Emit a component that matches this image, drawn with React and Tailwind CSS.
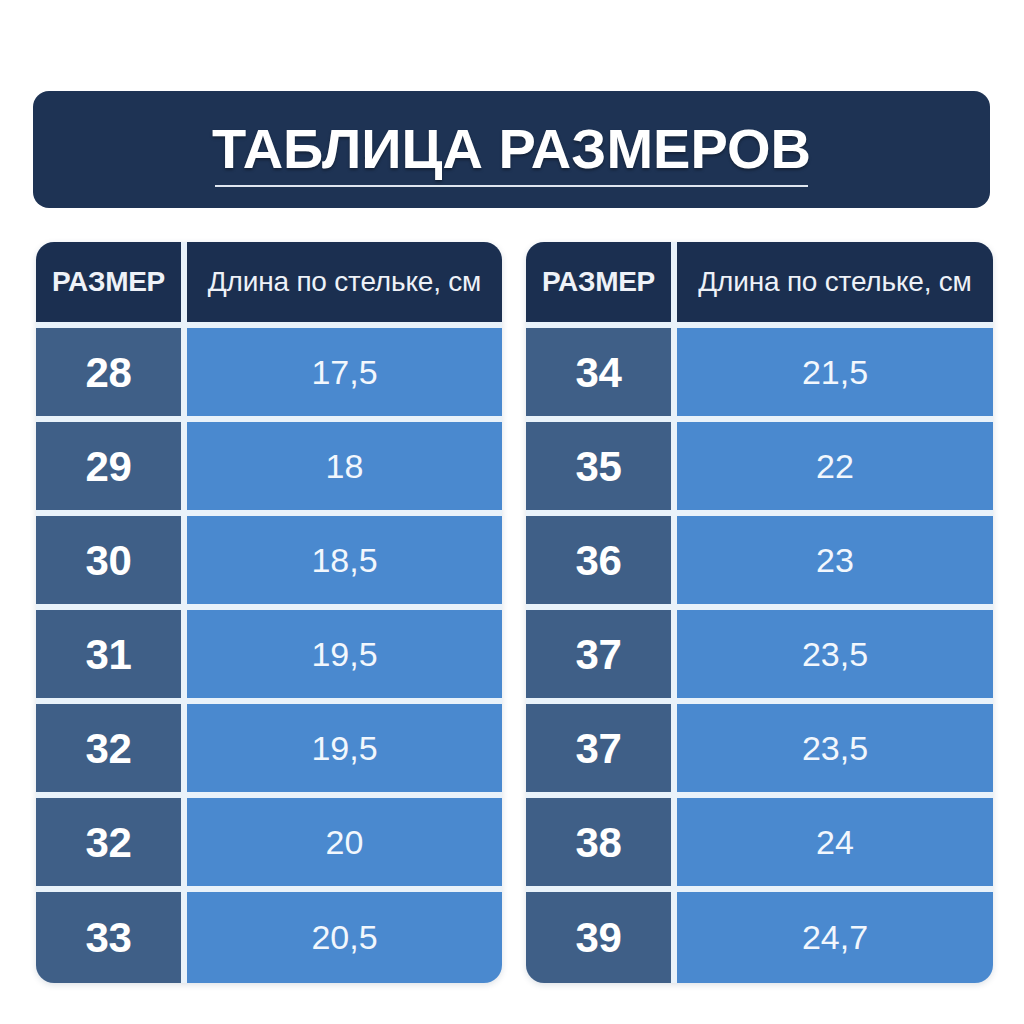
import React from "react";

const left = [
  ["28", "17,5"],
  ["29", "18"],
  ["30", "18,5"],
  ["31", "19,5"],
  ["32", "19,5"],
  ["32", "20"],
  ["33", "20,5"],
];
const right = [
  ["34", "21,5"],
  ["35", "22"],
  ["36", "23"],
  ["37", "23,5"],
  ["37", "23,5"],
  ["38", "24"],
  ["39", "24,7"],
];

function Table({ rows }) {
  return (
    <div className="flex flex-col gap-[6px] rounded-[18px] overflow-hidden bg-[#e9f2fa] shadow-[0_2px_6px_rgba(30,51,84,0.15)]">
      <div className="flex gap-[6px] h-[80px]">
        <div className="w-[145px] bg-[#1b2f50] flex items-center justify-center text-[28px] font-bold text-[#eef2f8] tracking-[-0.3px]">
          РАЗМЕР
        </div>
        <div className="flex-1 bg-[#1b2f50] flex items-center justify-center text-[28px] text-[#eef2f8] tracking-[-0.2px]">
          Длина по стельке, см
        </div>
      </div>
      {rows.map(([s, l], i) => (
        <div
          key={i}
          className={
            i === rows.length - 1
              ? "flex gap-[6px] h-[91px]"
              : "flex gap-[6px] h-[88px]"
          }
        >
          <div className="w-[145px] bg-[#3f5f87] flex items-center justify-center text-[42px] font-bold text-white tracking-[-0.3px]">
            {s}
          </div>
          <div className="flex-1 bg-[#4a89cf] flex items-center justify-center text-[34px] text-[#f2f7fd]">
            {l}
          </div>
        </div>
      ))}
    </div>
  );
}

export default function App() {
  return (
    <div
      className="w-[1024px] h-[1024px] bg-white pt-[91px]"
      style={{ fontFamily: '"Liberation Sans", Arial, sans-serif' }}
    >
      <div className="ml-[33px] w-[957px] h-[117px] rounded-[16px] bg-[#1e3354] flex flex-col items-center pt-[25px]">
        <div className="text-[56px] leading-[66px] font-bold text-white [text-shadow:0_2px_3px_rgba(0,0,0,0.35)]">
          ТАБЛИЦА РАЗМЕРОВ
        </div>
        <div className="w-[593px] h-[2px] bg-[#dfe6f0] mt-[3px]"></div>
      </div>
      <div className="ml-[36px] w-[957px] mt-[34px] grid grid-cols-[466px_467px] gap-[24px]">
        <Table rows={left} />
        <Table rows={right} />
      </div>
    </div>
  );
}
